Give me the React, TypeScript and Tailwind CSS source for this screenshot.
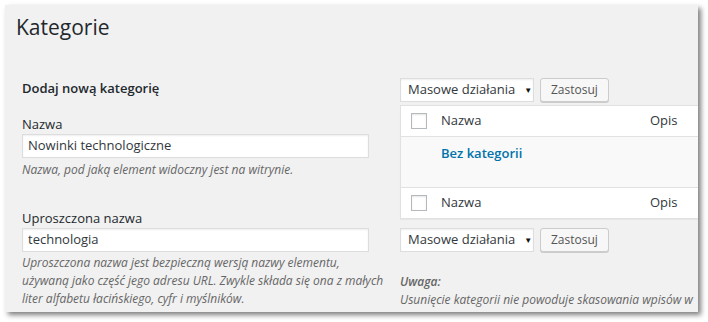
const font = { fontFamily: '"Open Sans", "Noto Sans", sans-serif' };

function BulkActions() {
  return (
    <div className="flex gap-[6px]">
      <div className="flex h-[24px] w-[134px] items-center whitespace-nowrap border border-[#dddddd] bg-white pl-[7px] text-[13px] text-[#32373c] shadow-[inset_0_1px_2px_rgba(0,0,0,0.07)]">
        <span>Masowe działania</span>
        <span className="ml-[9px] shrink-0 text-[8px] text-[#111]">▼</span>
      </div>
      <button
        className="h-[24px] rounded-[3px] border border-[#cccccc] bg-[#f7f7f7] px-[10px] text-[12px] text-[#555] shadow-[0_1px_0_#ccc]"
        type="button"
      >
        Zastosuj
      </button>
    </div>
  );
}

function Checkbox() {
  return <span className="block h-[16px] w-[16px] border border-[#b4b9be] bg-white shadow-[inset_0_1px_2px_rgba(0,0,0,0.1)]" />;
}

function HeadRow({ border }: { border: string }) {
  return (
    <div className={`flex h-[31px] items-center bg-white text-[13px] text-[#32373c] ${border}`}>
      <div className="w-[40px] pl-[10px]">
        <Checkbox />
      </div>
      <div className="w-[209px]">Nazwa</div>
      <div>Opis</div>
    </div>
  );
}

export default function App() {
  return (
    <div className="h-[322px] w-[708px] bg-white p-[5px]" style={font}>
      <div className="h-[307px] w-[693px] overflow-hidden bg-[#f1f1f1] shadow-[3px_3px_5px_rgba(0,0,0,0.5)]">
        <h1 className="ml-[11px] mt-[7px] text-[21px] leading-[30px] font-normal text-[#23282d]">Kategorie</h1>

        <div className="mt-[36px] flex">
          <div className="ml-[17px] w-[347px] shrink-0">
            <h2 className="text-[13px] leading-[20px] font-semibold text-[#23282d]">Dodaj nową kategorię</h2>

            <div className="mt-[17px] text-[13px] leading-[18px] text-[#23282d]">Nazwa</div>
            <div className="mt-[1px] flex h-[24px] items-center border border-[#dddddd] bg-white px-[5px] text-[13px] text-[#32373c] shadow-[inset_0_1px_2px_rgba(0,0,0,0.07)]">
              Nowinki technologiczne
            </div>
            <p className="mt-[3px] text-[12px] leading-[18px] italic text-[#666]">Nazwa, pod jaką element widoczny jest na witrynie.</p>

            <div className="mt-[30px] text-[13px] leading-[18px] text-[#23282d]">Uproszczona nazwa</div>
            <div className="mt-[1px] flex h-[24px] items-center border border-[#dddddd] bg-white px-[5px] text-[13px] text-[#32373c] shadow-[inset_0_1px_2px_rgba(0,0,0,0.07)]">
              technologia
            </div>
            <p className="mt-[2px] w-[362px] text-[12px] leading-[18px] italic text-[#666]">
              Uproszczona nazwa jest bezpieczną wersją nazwy elementu, używaną jako część jego adresu URL. Zwykle składa się ona z małych liter alfabetu łacińskiego, cyfr i myślników.
            </p>
          </div>

          <div className="ml-[31px] w-[320px] shrink-0">
            <BulkActions />
            <div className="mt-[3px] w-[320px] border border-[#e1e1e1] shadow-[0_1px_1px_rgba(0,0,0,0.04)]">
              <HeadRow border="border-b border-[#e1e1e1]" />
              <div className="h-[50px] bg-[#f9f9f9] pl-[40px] pt-[6px] text-[13px] leading-[20px] font-semibold text-[#0073aa]">Bez kategorii</div>
              <HeadRow border="border-t border-[#e1e1e1]" />
            </div>
            <div className="mt-[9px]">
              <BulkActions />
            </div>
            <p className="mt-[21px] w-[300px] text-[12px] leading-[18px] italic text-[#666]">
              <strong className="font-semibold">Uwaga:</strong>
              <br />
              Usunięcie kategorii nie powoduje skasowania wpisów w tej kategorii. Zamiast tego wpisy zostaną przypisane do kategorii
            </p>
          </div>
        </div>
      </div>
    </div>
  );
}
